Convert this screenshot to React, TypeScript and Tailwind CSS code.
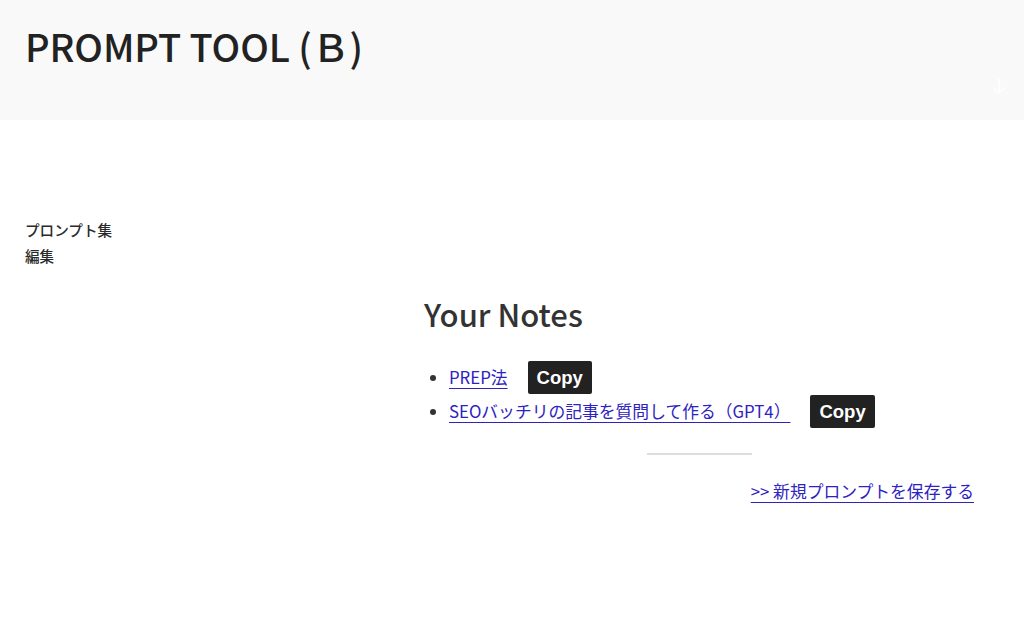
import React from 'react'

const notes = [
  { title: 'PREP法' },
  { title: 'SEOバッチリの記事を質問して作る（GPT4）' },
]

const font = { fontFamily: '"Noto Sans CJK JP", "Noto Sans", sans-serif' }

const App = () => {
  return (
    <div className="min-h-[621px] bg-white text-[#222]" style={font}>
      {/* Header */}
      <header className="relative flex h-[120px] items-start bg-[#f9f9f9] px-[25px] pt-[20px]">
        <h1 className="text-[38px] font-medium leading-[52px] tracking-[-0.1px] text-[#222]">PROMPT TOOL (Ｂ)</h1>
        <svg className="absolute right-[18px] top-[78px]" width="14" height="16" viewBox="0 0 14 16" fill="none" stroke="white" strokeWidth="1.6" strokeLinecap="round" strokeLinejoin="round">
          <path d="M7 1v14M1.5 9.5 7 15l5.5-5.5" />
        </svg>
      </header>

      <div className="flex pl-[25px] pt-[97px]">
        {/* Sidebar */}
        <nav className="flex w-[399px] flex-col text-[14.6px] font-medium leading-[26px] text-[#2a2a2a]">
          <a href="#">プロンプト集</a>
          <a href="#">編集</a>
        </nav>

        {/* Main */}
        <main className="mt-[73px] flex w-[550px] flex-col">
          <h2 className="text-[31px] font-medium leading-[48px] text-[#333]">Your Notes</h2>
          <ul className="mt-[22px] list-disc pl-[25px] text-[16.8px] marker:text-[#333]">
            {notes.map(n => (
              <li key={n.title} className="h-[34px] leading-[34px]">
                <a href="#" className="text-[#2e22c0] underline decoration-1 underline-offset-[4px]">
                  {n.title}
                </a>
                <button
                  className="ml-[20px] rounded-[2px] bg-[#222] px-[9px] py-[3px] text-[18.5px] font-bold leading-[27px] text-white"
                  style={{ fontFamily: '"Liberation Sans", Arial, sans-serif' }}
                >
                  Copy
                </button>
              </li>
            ))}
          </ul>
          <hr className="mx-auto mt-[25px] w-[105px] border-t-2 border-[#ddd]" />
          <div className="mt-[23px] flex justify-end">
            <a href="#" className="text-[16.8px] leading-[26px] text-[#2e22c0] underline decoration-1 underline-offset-[4px]">
              &gt;&gt; 新規プロンプトを保存する
            </a>
          </div>
        </main>
      </div>
    </div>
  )
}

export default App
